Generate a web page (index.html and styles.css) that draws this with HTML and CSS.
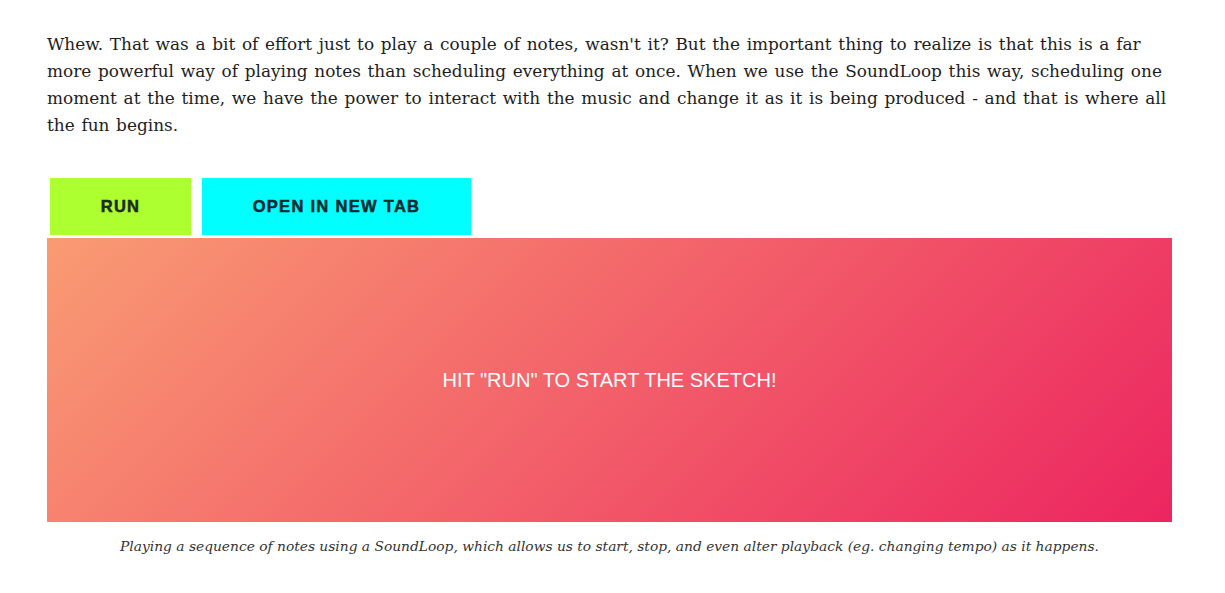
FILE: index.html
```html
<!DOCTYPE html>
<html>
<head>
<meta charset="utf-8">
<link rel="stylesheet" href="styles.css">
</head>
<body>
<main class="article">
  <p class="lead">Whew. That was a bit of effort just to play a couple of notes, wasn't it? But the important thing to realize is that this is a far more powerful way of playing notes than scheduling everything at once. When we use the SoundLoop this way, scheduling one moment at the time, we have the power to interact with the music and change it as it is being produced - and that is where all the fun begins.</p>
  <figure class="sketch">
    <div class="toolbar">
      <button class="btn btn-run">RUN</button>
      <button class="btn btn-tab">OPEN IN NEW TAB</button>
    </div>
    <div class="stage">HIT "RUN" TO START THE SKETCH!</div>
    <figcaption class="caption">Playing a sequence of notes using a SoundLoop, which allows us to start, stop, and even alter playback (eg. changing tempo) as it happens.</figcaption>
  </figure>
</main>
</body>
</html>
```
FILE: styles.css
```css
html, body {
  margin: 0;
  padding: 0;
  background: #fff;
}
.article {
  width: 1125px;
  margin-left: 47px;
  padding-top: 31px;
}
.lead {
  margin: 0;
  font-family: "DejaVu Serif", serif;
  font-size: 16.9px;
  word-spacing: 1.35px;
  line-height: 27px;
  color: #1d1d1d;
}
.sketch {
  margin: 39px 0 0 0;
}
.toolbar {
  display: flex;
  gap: 11px;
  padding-left: 3px;
  margin-bottom: 3px;
}
.btn {
  border: none;
  height: 57px;
  font-family: "Liberation Sans", Arial, sans-serif;
  font-weight: 700;
  font-size: 16.5px;
  letter-spacing: 1.3px;
  color: #1c2b1e;
  -webkit-text-stroke: 0.5px #1c2b1e;
  padding: 0;
  cursor: pointer;
}
.btn-run {
  width: 141px;
  background: #adff2f;
}
.btn-tab {
  width: 269px;
  background: #00ffff;
  color: #0d2a30;
  -webkit-text-stroke: 0.5px #0d2a30;
}
.stage {
  height: 284px;
  background: linear-gradient(135deg, #f99b73, #ec2560);
  display: flex;
  align-items: center;
  justify-content: center;
  color: #fff;
  font-family: "Liberation Sans", Arial, sans-serif;
  font-size: 20px;
}
.caption {
  margin-top: 13px;
  text-align: center;
  font-family: "DejaVu Serif", serif;
  font-style: italic;
  font-size: 13.8px;
  line-height: 22px;
  color: #333;
}
```
